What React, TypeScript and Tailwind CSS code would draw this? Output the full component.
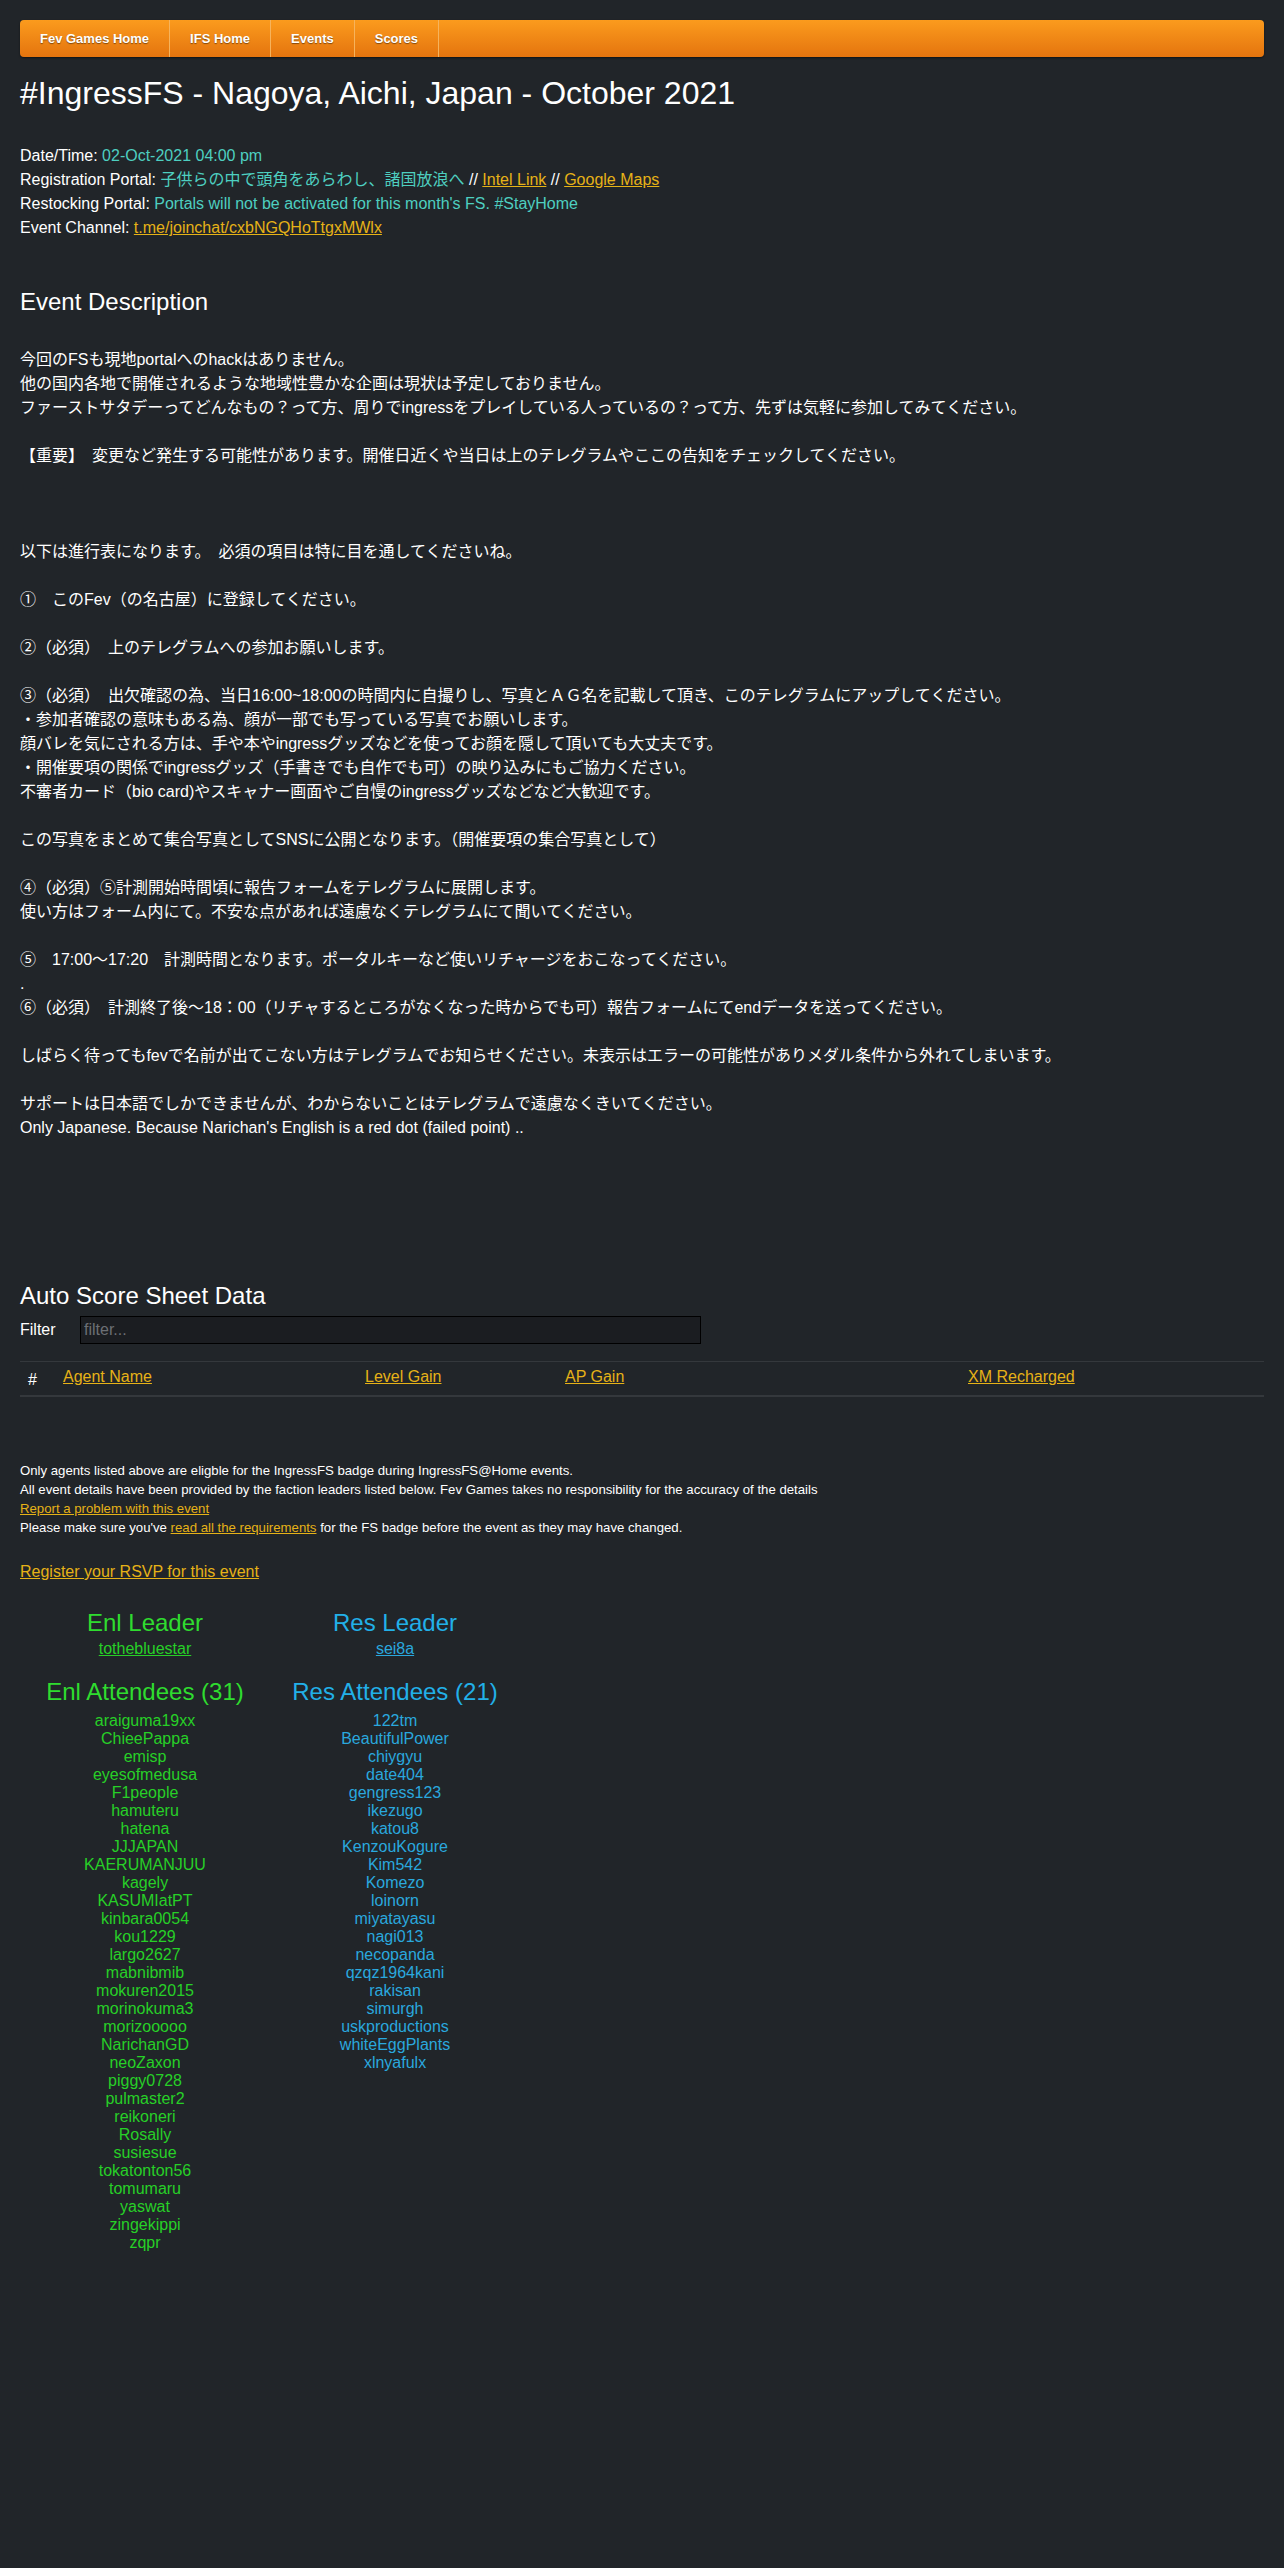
const FONT = "font-['Liberation_Sans','Noto_Sans_CJK_JP',sans-serif]";

const navItems = ["Fev Games Home", "IFS Home", "Events", "Scores"];

const description: string[] = [
  "今回のFSも現地portalへのhackはありません。",
  "他の国内各地で開催されるような地域性豊かな企画は現状は予定しておりません。",
  "ファーストサタデーってどんなもの？って方、周りでingressをプレイしている人っているの？って方、先ずは気軽に参加してみてください。",
  "",
  "【重要】　変更など発生する可能性があります。開催日近くや当日は上のテレグラムやここの告知をチェックしてください。",
  "",
  "",
  "",
  "以下は進行表になります。　必須の項目は特に目を通してくださいね。",
  "",
  "①　このFev（の名古屋）に登録してください。",
  "",
  "②（必須）　上のテレグラムへの参加お願いします。",
  "",
  "③（必須）　出欠確認の為、当日16:00~18:00の時間内に自撮りし、写真とＡＧ名を記載して頂き、このテレグラムにアップしてください。",
  "・参加者確認の意味もある為、顔が一部でも写っている写真でお願いします。",
  "顔バレを気にされる方は、手や本やingressグッズなどを使ってお顔を隠して頂いても大丈夫です。",
  "・開催要項の関係でingressグッズ（手書きでも自作でも可）の映り込みにもご協力ください。",
  "不審者カード（bio card)やスキャナー画面やご自慢のingressグッズなどなど大歓迎です。",
  "",
  "この写真をまとめて集合写真としてSNSに公開となります。（開催要項の集合写真として）",
  "",
  "④（必須）⑤計測開始時間頃に報告フォームをテレグラムに展開します。",
  "使い方はフォーム内にて。不安な点があれば遠慮なくテレグラムにて聞いてください。",
  "",
  "⑤　17:00～17:20　計測時間となります。ポータルキーなど使いリチャージをおこなってください。",
  ".",
  "⑥（必須）　計測終了後～18：00（リチャするところがなくなった時からでも可）報告フォームにてendデータを送ってください。",
  "",
  "しばらく待ってもfevで名前が出てこない方はテレグラムでお知らせください。未表示はエラーの可能性がありメダル条件から外れてしまいます。",
  "",
  "サポートは日本語でしかできませんが、わからないことはテレグラムで遠慮なくきいてください。",
  "Only Japanese. Because Narichan's English is a red dot (failed point) ..",
];

const enl = [
  "araiguma19xx", "ChieePappa", "emisp", "eyesofmedusa", "F1people", "hamuteru", "hatena", "JJJAPAN",
  "KAERUMANJUU", "kagely", "KASUMIatPT", "kinbara0054", "kou1229", "largo2627", "mabnibmib", "mokuren2015",
  "morinokuma3", "morizooooo", "NarichanGD", "neoZaxon", "piggy0728", "pulmaster2", "reikoneri", "Rosally",
  "susiesue", "tokatonton56", "tomumaru", "yaswat", "zingekippi", "zqpr",
];

const res = [
  "122tm", "BeautifulPower", "chiygyu", "date404", "gengress123", "ikezugo", "katou8", "KenzouKogure",
  "Kim542", "Komezo", "loinorn", "miyatayasu", "nagi013", "necopanda", "qzqz1964kani", "rakisan",
  "simurgh", "uskproductions", "whiteEggPlants", "xlnyafulx",
];

const linkCls = "text-[#e6b217] underline";

export default function App() {
  return (
    <div className={`${FONT} min-h-[2568px] bg-[#212529] px-5 pt-5 text-white text-[16px] leading-[24px]`}>
      <nav className="flex h-[37px] rounded-[4px] bg-linear-to-b from-[#fb9b1d] to-[#e4740e] shadow-[0_1px_2px_rgba(0,0,0,0.5)]">
        {navItems.map((n) => (
          <div
            key={n}
            className="flex items-center px-5 border-r border-[#f6b35c] text-[13px] font-bold text-white [text-shadow:0_1px_1px_rgba(0,0,0,0.45)]"
          >
            {n}
          </div>
        ))}
      </nav>

      <h1 className="mt-[17px] text-[32px] leading-[38px] font-normal">
        #IngressFS - Nagoya, Aichi, Japan - October 2021
      </h1>

      <div className="mt-[32px]">
        <div>
          Date/Time: <span className="text-[#4ecfc0]">02-Oct-2021 04:00 pm</span>
        </div>
        <div>
          Registration Portal: <span className="text-[#4ecfc0]">子供らの中で頭角をあらわし、諸国放浪へ</span> //{" "}
          <a className={linkCls}>Intel Link</a> // <a className={linkCls}>Google Maps</a>
        </div>
        <div>
          Restocking Portal:{" "}
          <span className="text-[#4ecfc0]">Portals will not be activated for this month's FS. #StayHome</span>
        </div>
        <div>
          Event Channel: <a className={linkCls}>t.me/joinchat/cxbNGQHoTtgxMWlx</a>
        </div>
      </div>

      <h3 className="mt-[47px] text-[24px] leading-[29px]">Event Description</h3>

      <div className="mt-[32px]">
        {description.map((line, i) => (
          <div key={i} className="min-h-[24px] whitespace-pre">
            {line}
          </div>
        ))}
      </div>

      <h3 className="mt-[141px] text-[24px] leading-[29px]">Auto Score Sheet Data</h3>

      <div className="mt-[6px] flex h-[28px] items-center">
        <span className="w-[60px]">Filter</span>
        <input
          placeholder="filter..."
          className="h-[28px] w-[621px] border border-black bg-[#1b1d21] px-[3px] text-[16px] text-white placeholder:text-[#6c6f74] outline-none"
        />
      </div>

      <div className="mt-[17px] grid grid-cols-[35px_302px_200px_403px_1fr] border-t border-b-2 border-t-[#34383c] border-b-[#34383c] py-[3px]">
        <div className="pl-[8px] pt-[3px]">#</div>
        <div className="pl-[8px]">
          <a className={linkCls}>Agent Name</a>
        </div>
        <div className="pl-[8px]">
          <a className={linkCls}>Level Gain</a>
        </div>
        <div className="pl-[8px]">
          <a className={linkCls}>AP Gain</a>
        </div>
        <div className="pl-[8px]">
          <a className={linkCls}>XM Recharged</a>
        </div>
      </div>

      <div className="mt-[64px] text-[13.2px] leading-[19px]">
        <div>Only agents listed above are eligble for the IngressFS badge during IngressFS@Home events.</div>
        <div>
          All event details have been provided by the faction leaders listed below. Fev Games takes no responsibility for
          the accuracy of the details
        </div>
        <div>
          <a className={linkCls}>Report a problem with this event</a>
        </div>
        <div>
          Please make sure you've <a className={linkCls}>read all the requirements</a> for the FS badge before the event
          as they may have changed.
        </div>
      </div>

      <div className="mt-[23px]">
        <a className={linkCls}>Register your RSVP for this event</a>
      </div>

      <div className="mt-[24px] grid w-[500px] grid-cols-2 text-center">
        <div className="text-[#2fdc2f]">
          <h4 className="text-[24px] leading-[29px]">Enl Leader</h4>
          <a className="text-[#27d027] underline">tothebluestar</a>
          <h4 className="mt-[16px] text-[24px] leading-[29px]">Enl Attendees (31)</h4>
          <div className="mt-[6px] text-[#27d027] leading-[18px]">
            {enl.map((n) => (
              <div key={n}>{n}</div>
            ))}
          </div>
        </div>
        <div className="text-[#22b0e8]">
          <h4 className="text-[24px] leading-[29px]">Res Leader</h4>
          <a className="text-[#2aa8de] underline">sei8a</a>
          <h4 className="mt-[16px] text-[24px] leading-[29px]">Res Attendees (21)</h4>
          <div className="mt-[6px] text-[#2aa8de] leading-[18px]">
            {res.map((n) => (
              <div key={n}>{n}</div>
            ))}
          </div>
        </div>
      </div>
    </div>
  );
}
